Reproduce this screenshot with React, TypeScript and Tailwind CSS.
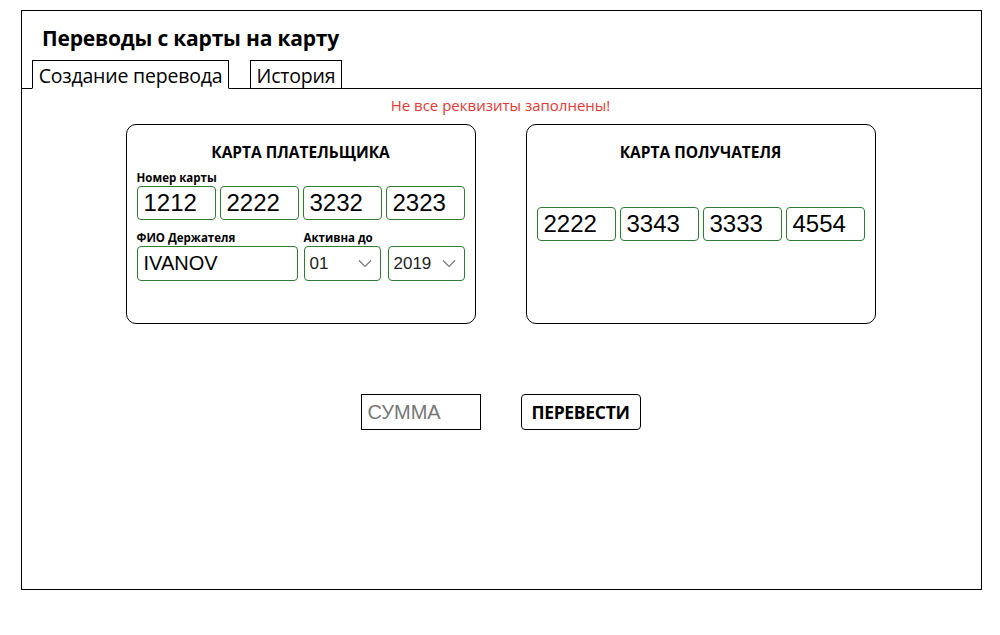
import { useState } from "react";

function CardInput(props: { value: string }) {
  return (
    <input
      className="w-[79px] h-[34px] px-[6px] border border-[#2e7d32] rounded-[4px] text-[24px] text-black outline-none"
      style={{ fontFamily: '"Liberation Sans", Arial, sans-serif' }}
      defaultValue={props.value}
      type="text"
    />
  );
}

function Select(props: { value: string }) {
  return (
    <div className="relative w-[77px] h-[35px] border border-[#2e7d32] rounded-[4px] flex items-center">
      <span
        className="pl-[5px] text-[17px] text-[#222]"
        style={{ fontFamily: '"Liberation Sans", Arial, sans-serif' }}
      >
        {props.value}
      </span>
      <svg
        className="absolute right-[8px] top-[12px]"
        width="14"
        height="9"
        viewBox="0 0 14 9"
        fill="none"
        stroke="#777"
        strokeWidth="1.2"
      >
        <path d="M1 1.5 L7 7.5 L13 1.5" />
      </svg>
    </div>
  );
}

export default function App() {
  const [tab, setTab] = useState(0);
  const font = { fontFamily: '"Open Sans", "Noto Sans", sans-serif' };

  return (
    <div className="w-[1000px] h-[635px] bg-white pt-[10px] pl-[21px]" style={font}>
      <div className="w-[961px] h-[580px] border border-black flex flex-col">
        <div className="pl-[20px] pt-[13px] h-[49px] text-[21px] font-bold text-black leading-[28px] tracking-[-0.2px]">
          Переводы с карты на карту
        </div>
        <div className="flex items-end gap-[21px] pl-[10px] border-b border-black h-[29px]">
          <button
            onClick={() => setTab(0)}
            className="-mb-px h-[29px] w-[197px] border border-black border-b-white bg-white text-[19.5px] leading-[30px] text-black tracking-[-0.2px]"
          >
            Создание перевода
          </button>
          <button
            onClick={() => setTab(1)}
            className="h-[28px] w-[92px] border border-black border-b-0 text-[19.5px] leading-[30px] text-black tracking-[-0.2px]"
          >
            История
          </button>
        </div>

        <div className="flex flex-col items-center pr-[2px]">
          <div className="mt-[6px] h-[22px] text-[15px] text-[#e53935] leading-[20px]">
            Не все реквизиты заполнены!
          </div>

          <div className="mt-[7px] flex gap-[50px]">
            <div className="w-[350px] h-[200px] border border-black rounded-[10px] px-[10px] pt-[17px]">
              <div className="text-center text-[15.5px] font-bold leading-[20px]">КАРТА ПЛАТЕЛЬЩИКА</div>
              <div className="mt-[8px] text-[11.5px] font-bold leading-[16px]">Номер карты</div>
              <div className="flex gap-[4px]">
                <CardInput value="1212" />
                <CardInput value="2222" />
                <CardInput value="3232" />
                <CardInput value="2323" />
              </div>
              <div className="flex mt-[10px]">
                <div className="w-[161px]">
                  <div className="text-[11.5px] font-bold leading-[16px]">ФИО Держателя</div>
                  <input
                    className="w-[161px] h-[35px] px-[6px] border border-[#2e7d32] rounded-[4px] text-[20px] outline-none"
                    style={{ fontFamily: '"Liberation Sans", Arial, sans-serif' }}
                    defaultValue="IVANOV"
                  />
                </div>
                <div className="ml-[6px]">
                  <div className="text-[11.5px] font-bold leading-[16px]">Активна до</div>
                  <div className="flex gap-[7px]">
                    <Select value="01" />
                    <Select value="2019" />
                  </div>
                </div>
              </div>
            </div>

            <div className="w-[350px] h-[200px] border border-black rounded-[10px] px-[10px] pt-[17px]">
              <div className="text-center text-[15.5px] font-bold leading-[20px]">КАРТА ПОЛУЧАТЕЛЯ</div>
              <div className="mt-[45px] flex gap-[4px]">
                <CardInput value="2222" />
                <CardInput value="3343" />
                <CardInput value="3333" />
                <CardInput value="4554" />
              </div>
            </div>
          </div>

          <div className="mt-[70px] flex gap-[40px]">
            <input
              className="w-[120px] h-[36px] px-[6px] border border-black text-[20px] outline-none placeholder:text-[#777]"
              style={{ fontFamily: '"Liberation Sans", Arial, sans-serif' }}
              placeholder="СУММА"
            />
            <button className="w-[120px] h-[36px] border border-black rounded-[4px] text-[17.5px] font-bold tracking-[-0.3px]">
              ПЕРЕВЕСТИ
            </button>
          </div>
        </div>
        {tab === 1 && <div />}
      </div>
    </div>
  );
}
